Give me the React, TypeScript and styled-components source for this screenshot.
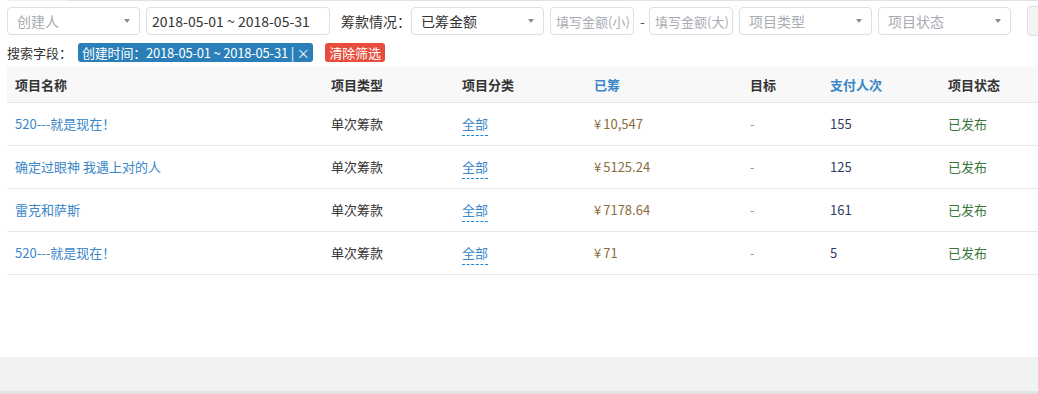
import React from 'react';
import styled, { createGlobalStyle } from 'styled-components';

const GlobalStyle = createGlobalStyle`
  html, body {
    margin: 0;
    padding: 0;
    background: #fff;
    font-family: "Microsoft YaHei", "Noto Sans CJK SC", "Noto Sans", sans-serif;
    font-size: 13px;
    color: #333;
  }
`;

type Row = {
    name: string;
    kind: string;
    raised: string;
    payers: string;
};

const rows: Row[] = [
    { name: '520---就是现在！', kind: '单次筹款', raised: '10,547', payers: '155' },
    { name: '确定过眼神 我遇上对的人', kind: '单次筹款', raised: '5125.24', payers: '125' },
    { name: '雷克和萨斯', kind: '单次筹款', raised: '7178.64', payers: '161' },
    { name: '520---就是现在！', kind: '单次筹款', raised: '71', payers: '5' },
];

function App() {
    return (
        <Page>
            <GlobalStyle />
            <TopLine />
            <Filters>
                <Select $w={133} $placeholder>
                    <span>创建人</span>
                    <Caret />
                </Select>
                <Input $w={184}>2018-05-01 ~ 2018-05-31</Input>
                <Label>筹款情况：</Label>
                <Select $w={133}>
                    <span>已筹金额</span>
                    <Caret />
                </Select>
                <Input $w={84} $placeholder $small>填写金额(小)</Input>
                <Dash>-</Dash>
                <Input $w={84} $placeholder $small>填写金额(大)</Input>
                <Select $w={133} $placeholder>
                    <span>项目类型</span>
                    <Caret />
                </Select>
                <Select $w={133} $placeholder>
                    <span>项目状态</span>
                    <Caret />
                </Select>
                <GhostButton />
            </Filters>

            <SearchFields>
                <FieldLabel>搜索字段：</FieldLabel>
                <Tag $color="#2a7fb8">创建时间：2018-05-01 ~ 2018-05-31 | ×</Tag>
                <Tag $color="#e74c3c">清除筛选</Tag>
            </SearchFields>

            <Table>
                <thead>
                    <tr>
                        <Th $w={316}>项目名称</Th>
                        <Th $w={131}>项目类型</Th>
                        <Th $w={132}>项目分类</Th>
                        <Th $w={156} $blue>已筹</Th>
                        <Th $w={80}>目标</Th>
                        <Th $w={118} $blue>支付人次</Th>
                        <Th>项目状态</Th>
                    </tr>
                </thead>
                <tbody>
                    {rows.map((r, i) => (
                        <tr key={i}>
                            <Td><NameLink>{r.name}</NameLink></Td>
                            <Td>{r.kind}</Td>
                            <Td><Category>全部</Category></Td>
                            <Td><Money><Yen>¥</Yen>{r.raised}</Money></Td>
                            <Td><Muted>-</Muted></Td>
                            <Td><Count>{r.payers}</Count></Td>
                            <Td><Status>已发布</Status></Td>
                        </tr>
                    ))}
                </tbody>
            </Table>

            <Spacer />
            <Footer />
        </Page>
    );
}

export default App;

const Page = styled.div`
    width: 1038px;
    height: 394px;
    overflow: hidden;
    display: flex;
    flex-direction: column;
`;

const TopLine = styled.div`
    height: 1px;
    margin-left: 7px;
    background: linear-gradient(to right, #f0f0f0 0 62px, #e2e2e2 62px);
    flex-shrink: 0;
`;

const Filters = styled.div`
    display: flex;
    align-items: center;
    gap: 6px;
    padding: 6px 0 0 7px;
    height: 28px;
    white-space: nowrap;
`;

const Field = styled.div<{ $w: number; $placeholder?: boolean; $small?: boolean }>`
    box-sizing: border-box;
    width: ${p => p.$w}px;
    height: 28px;
    border: 1px solid #dcdfe6;
    border-radius: 4px;
    background: #fff;
    display: flex;
    align-items: center;
    padding: 0 7px;
    font-size: ${p => (p.$small ? '13px' : '14px')};
    color: ${p => (p.$placeholder ? '#a8abb2' : '#333')};
    flex-shrink: 0;
    overflow: hidden;
`;

const Select = styled(Field)`
    justify-content: space-between;
    padding-left: 9px;
    padding-right: 9px;
`;

const Input = styled(Field)`
    padding: 0 5px;
`;

const Caret = styled.i`
    width: 0;
    height: 0;
    border-left: 3.5px solid transparent;
    border-right: 3.5px solid transparent;
    border-top: 4px solid #8c8c8c;
`;

const Label = styled.span`
    display: inline-block;
    width: 64px;
    font-size: 14px;
    color: #333;
    margin-left: 5px;
    flex-shrink: 0;
`;

const Dash = styled.span`
    font-size: 14px;
    color: #555;
    width: 3px;
    flex-shrink: 0;
`;

const GhostButton = styled.div`
    width: 30px;
    height: 28px;
    margin-left: 10px;
    border: 1px solid #dcdfe6;
    border-radius: 4px;
    background: #f4f4f5;
    flex-shrink: 0;
`;

const SearchFields = styled.div`
    display: flex;
    align-items: center;
    gap: 12px;
    padding: 7px 0 0 7px;
    height: 20px;
    font-size: 13px;
    color: #333;
`;

const FieldLabel = styled.span`
    margin-right: -6px;
`;

const Tag = styled.span<{ $color: string }>`
    display: inline-flex;
    align-items: center;
    height: 19px;
    padding: 0 4px;
    border-radius: 3px;
    background: ${p => p.$color};
    color: #fff;
    font-size: 13px;
    letter-spacing: -0.2px;
`;

const Table = styled.table`
    margin: 5px 0 0 7px;
    width: 1031px;
    border-collapse: collapse;
    table-layout: fixed;

    tbody tr {
        height: 43px;
        border-bottom: 1px solid #e8e8ec;
    }
`;

const Th = styled.th<{ $w?: number; $blue?: boolean }>`
    box-sizing: border-box;
    ${p => (p.$w ? `width: ${p.$w}px;` : '')}
    height: 35px;
    background: #f8f8f8;
    border-bottom: 1px solid #e8e8ec;
    text-align: left;
    padding: 0 8px;
    font-weight: bold;
    font-size: 13px;
    color: ${p => (p.$blue ? '#3a86c8' : '#333')};
    white-space: nowrap;
`;

const Td = styled.td`
    box-sizing: border-box;
    padding: 0 8px;
    font-size: 13px;
    color: #333;
    white-space: nowrap;
`;

const NameLink = styled.a`
    color: #3a86c8;
    text-decoration: none;
`;

const Category = styled.span`
    color: #3a86c8;
    border-bottom: 1px dashed #1a8ad8;
    padding-bottom: 2px;
`;

const Money = styled.span`
    color: #8a6d3b;
`;

const Yen = styled.span`
    margin-right: 2px;
`;

const Muted = styled.span`
    color: #999;
`;

const Count = styled.span`
    color: #2c3e60;
`;

const Status = styled.span`
    color: #3c763d;
`;

const Spacer = styled.div`
    flex: 1;
`;

const Footer = styled.div`
    height: 34px;
    background: #f1f2f4;
    border-bottom: 3px solid #e3e3e3;
    flex-shrink: 0;
`;
